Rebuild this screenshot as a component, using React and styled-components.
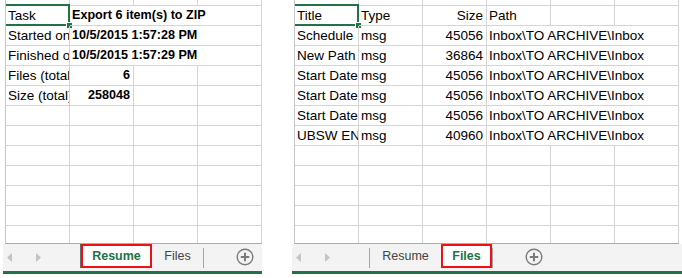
import styled, { createGlobalStyle, css } from "styled-components";

const GREEN = "#217346";
const GRID = "#d4d4d4";

const GlobalStyle = createGlobalStyle`
  body {
    margin: 0;
    background: #ffffff;
    font-family: "Liberation Sans", Arial, sans-serif;
  }
`;

const resumeRows = [
  [{ t: "Task", sel: true }, { t: "Export 6 item(s) to ZIP", bold: true, span: 3 }],
  [{ t: "Started on" }, { t: "10/5/2015 1:57:28 PM", bold: true, span: 3 }],
  [{ t: "Finished on" }, { t: "10/5/2015 1:57:29 PM", bold: true, span: 3 }],
  [{ t: "Files (total)" }, { t: "6", bold: true, right: true }, {}, {}],
  [{ t: "Size (total)" }, { t: "258048", bold: true, right: true }, {}, {}],
];

const PATH = "Inbox\\TO ARCHIVE\\Inbox";

const fileRows = [
  [{ t: "Title", sel: true }, { t: "Type" }, { t: "Size", right: true }, { t: "Path" }, {}, {}],
  ...[
    ["Schedule", "45056"],
    ["New Path", "36864"],
    ["Start Date", "45056"],
    ["Start Date", "45056"],
    ["Start Date", "45056"],
    ["UBSW ENERGY", "40960"],
  ].map(([title, size]) => [
    { t: title },
    { t: "msg" },
    { t: size, right: true },
    { t: PATH, span: 3 },
  ]),
];

const Sheet = ({ cols, rows, total }) => {
  const filled = [...rows];
  while (filled.length < total) filled.push(Array.from({ length: cols }, () => ({})));
  return (
    <Grid $cols={cols}>
      {Array.from({ length: cols }, (_, i) => (
        <Strip key={"s" + i} />
      ))}
      {filled.map((row, r) =>
        row.map((c, i) => (
          <Cell key={r + "-" + i} $span={c.span || 1}>
            <CellText $bold={c.bold} $right={c.right}>
              {c.t}
            </CellText>
            {c.sel && (
              <Selection>
                <Handle />
              </Selection>
            )}
          </Cell>
        ))
      )}
    </Grid>
  );
};

const ArrowIcon = ({ dir }) => (
  <svg width="5" height="9" viewBox="0 0 5 9">
    {dir === "left" ? (
      <polygon points="5,0 0,4.5 5,9" fill="#c4c4c4" />
    ) : (
      <polygon points="0,0 5,4.5 0,9" fill="#c4c4c4" />
    )}
  </svg>
);

const PlusIcon = () => (
  <svg width="18" height="18" viewBox="0 0 18 18">
    <circle cx="9" cy="9" r="7.8" fill="none" stroke="#7a7a7a" strokeWidth="1.4" />
    <path d="M9 4.8v8.4M4.8 9h8.4" stroke="#7a7a7a" strokeWidth="2" />
  </svg>
);

const TabStrip = ({ active }) => (
  <TabBar>
    <Nav>
      <ArrowIcon dir="left" />
      <ArrowIcon dir="right" />
    </Nav>
    <Divider $dark={active === "Resume"} />
    <Tab $w={71} $active={active === "Resume"}>Resume</Tab>
    <Tab $w={51} $active={active === "Files"}>Files</Tab>
    <Divider />
    <AddButton>
      <PlusIcon />
    </AddButton>
  </TabBar>
);

const App = () => {
  return (
    <>
      <GlobalStyle />
      <Page>
        <Panel $w={259}>
          <Sheet cols={4} rows={resumeRows} total={12} />
          <TabStrip active="Resume" />
        </Panel>
        <Panel $w={390}>
          <Sheet cols={6} rows={fileRows} total={12} />
          <TabStrip active="Files" />
        </Panel>
      </Page>
    </>
  );
};

export default App;

const Page = styled.div`
  display: flex;
  gap: 30px;
  padding-left: 3px;
`;

const Panel = styled.div`
  display: flex;
  flex-direction: column;
  width: ${(p) => p.$w}px;
`;

const Grid = styled.div`
  display: grid;
  grid-template-columns: repeat(${(p) => p.$cols}, 64px);
  grid-template-rows: 6px;
  grid-auto-rows: 20px;
  align-content: start;
  width: ${(p) => p.$cols * 64}px;
  height: 243px;
  margin-left: 2px;
  border-left: 1px solid #c6c6c6;
  border-bottom: 1px solid #ababab;
  overflow: hidden;
`;

const Strip = styled.div`
  border-right: 1px solid ${GRID};
  border-bottom: 1px solid ${GRID};
`;

const Cell = styled.div`
  position: relative;
  grid-column: span ${(p) => p.$span};
  border-right: 1px solid ${GRID};
  border-bottom: 1px solid ${GRID};
  min-width: 0;
`;

const CellText = styled.span`
  display: block;
  overflow: hidden;
  white-space: nowrap;
  padding: 0 3px 0 2px;
  line-height: 19px;
  font-size: 13.5px;
  color: #000;
  text-align: ${(p) => (p.$right ? "right" : "left")};
  ${(p) =>
    p.$bold &&
    css`
      font-weight: bold;
      font-size: 12.6px;
    `}
`;

const Selection = styled.div`
  position: absolute;
  top: -2px;
  left: -2px;
  right: -1px;
  bottom: -1px;
  border: 2px solid ${GREEN};
  pointer-events: none;
`;

const Handle = styled.div`
  position: absolute;
  right: -5px;
  bottom: -5px;
  width: 5px;
  height: 5px;
  background: ${GREEN};
  border: 1px solid #ffffff;
`;

const TabBar = styled.div`
  display: flex;
  align-items: flex-start;
  height: 27px;
  background: #f3f3f3;
  border-bottom: 3px solid ${GREEN};
`;

const Nav = styled.div`
  display: flex;
  align-items: center;
  gap: 24px;
  width: 73px;
  height: 26px;
  padding-left: 4px;
`;

const Divider = styled.div`
  width: 1px;
  height: ${(p) => (p.$dark ? 24 : 20)}px;
  margin-top: ${(p) => (p.$dark ? 0 : 4)}px;
  background: ${(p) => (p.$dark ? "#6b6b6b" : "#a6a6a6")};
`;

const Tab = styled.div`
  box-sizing: border-box;
  display: flex;
  align-items: center;
  justify-content: center;
  width: ${(p) => p.$w}px;
  height: 24px;
  font-size: 12.5px;
  color: #444444;
  ${(p) =>
    p.$active &&
    css`
      border: 2px solid #ee1111;
      background: #ffffff;
      color: ${GREEN};
      font-weight: bold;
    `}
`;

const AddButton = styled.div`
  display: flex;
  align-items: center;
  justify-content: center;
  width: 18px;
  height: 26px;
  margin-left: 32px;
`;
